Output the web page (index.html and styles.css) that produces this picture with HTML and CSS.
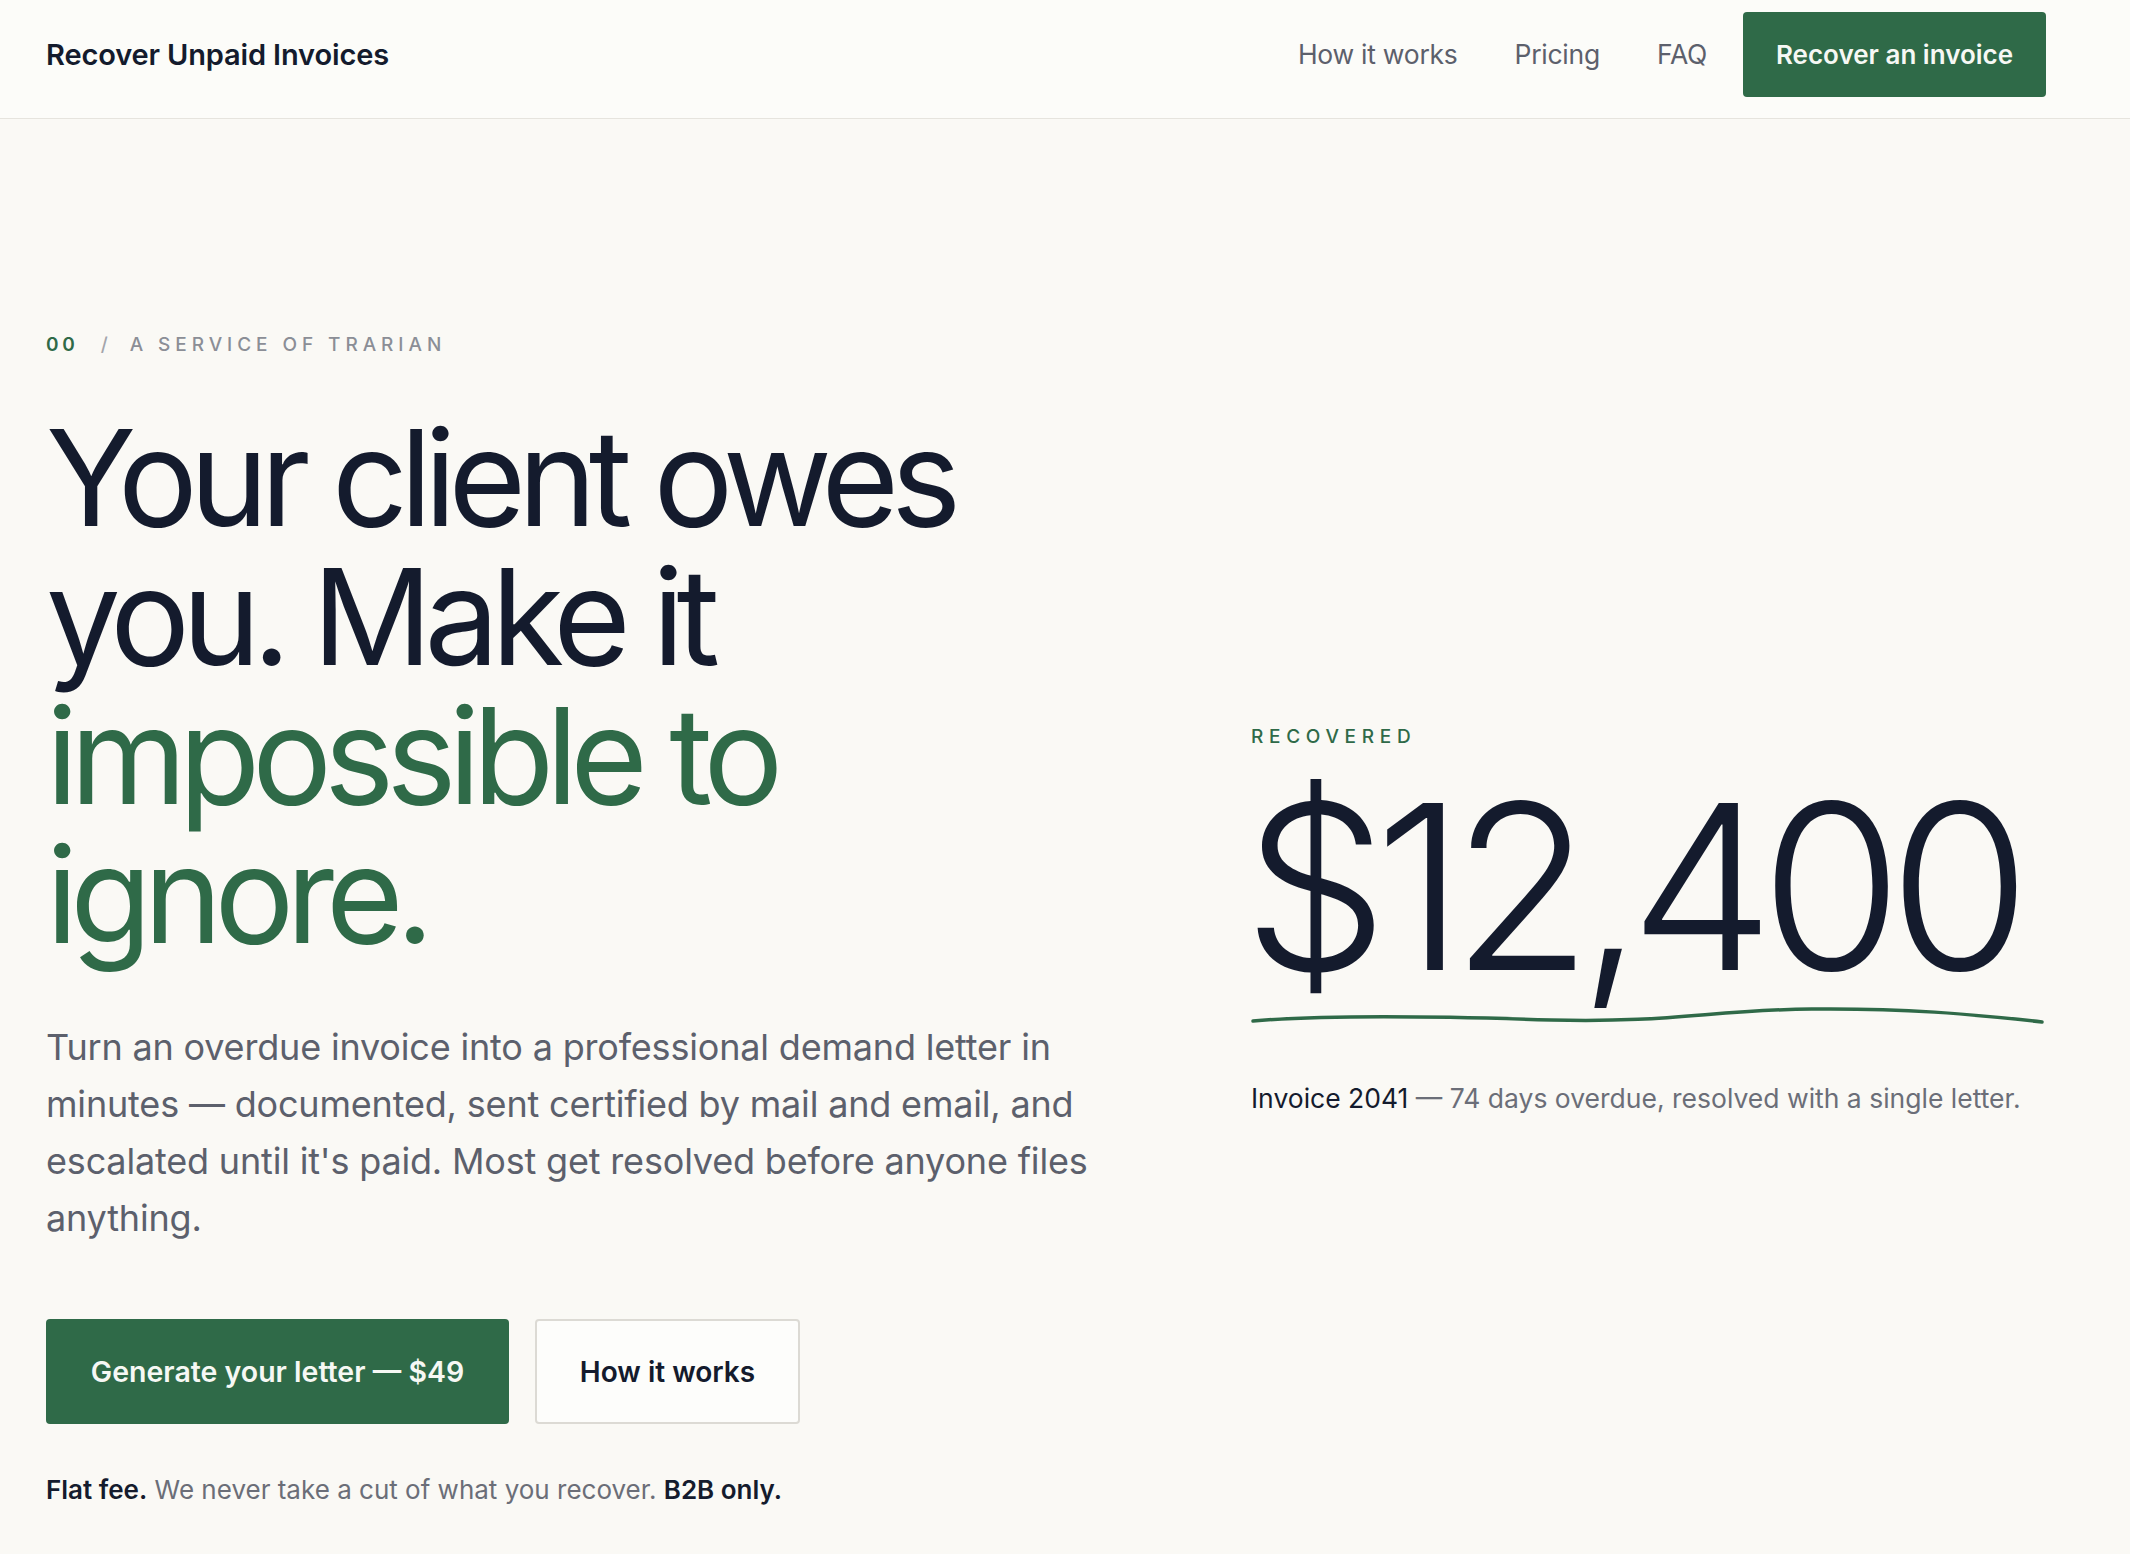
FILE: index.html
```html
<!DOCTYPE html>
<html lang="en">
<head>
<meta charset="utf-8">
<title>Recover Unpaid Invoices</title>
<link rel="stylesheet" href="styles.css">
</head>
<body>
<header class="site-header">
  <a class="brand" href="#">Recover Unpaid Invoices</a>
  <nav class="nav">
    <div class="nav-links">
      <a href="#">How it works</a>
      <a href="#">Pricing</a>
      <a href="#">FAQ</a>
    </div>
    <a class="btn btn-primary btn-nav" href="#">Recover an invoice</a>
  </nav>
</header>
<main class="hero">
  <section class="hero-copy">
    <p class="eyebrow"><span class="eyebrow-num">00</span><span class="eyebrow-sep">/</span><span>A SERVICE OF TRARIAN</span></p>
    <h1 class="headline">Your client owes you. Make it <span class="accent">impossible to ignore.</span></h1>
    <p class="lede">Turn an overdue invoice into a professional demand letter in minutes — documented, sent certified by mail and email, and escalated until it's paid. Most get resolved before anyone files anything.</p>
    <div class="actions">
      <a class="btn btn-primary btn-lg btn-cta" href="#">Generate your letter — $49</a>
      <a class="btn btn-secondary btn-lg" href="#">How it works</a>
    </div>
    <p class="fineprint"><strong>Flat fee.</strong> We never take a cut of what you recover. <strong>B2B only.</strong></p>
  </section>
  <aside class="stat">
    <p class="stat-label">RECOVERED</p>
    <p class="stat-amount">$12,400</p>
    <svg class="stat-underline" viewBox="0 0 794 22" preserveAspectRatio="none" aria-hidden="true">
      <path d="M2 17 C 60 12, 150 11, 300 16 C 420 19, 460 6, 560 5 C 650 4, 720 10, 790 18" fill="none" stroke="#2f6a48" stroke-width="3.5" stroke-linecap="round"/>
    </svg>
    <p class="stat-caption"><span class="stat-caption-strong">Invoice 2041</span> — 74 days overdue, resolved with a single letter.</p>
  </aside>
</main>
</body>
</html>
```

FILE: styles.css
```css
* { box-sizing: border-box; }

html, body {
  margin: 0;
  padding: 0;
}

body {
  background: #faf9f5;
  color: #141b2d;
  font-family: "Inter", "Roboto", "Liberation Sans", sans-serif;
  -webkit-font-smoothing: antialiased;
}

a { text-decoration: none; color: inherit; }

p { margin: 0; }

.site-header {
  height: 119px;
  display: flex;
  align-items: center;
  justify-content: space-between;
  padding: 0 84px 10px 46px;
  background: #fcfcf9;
  border-bottom: 1px solid #e6e4de;
}

.brand {
  font-size: 29px;
  font-weight: 600;
  letter-spacing: -0.005em;
  color: #141b2d;
}

.nav {
  display: flex;
  align-items: center;
}

.nav-links {
  display: flex;
  gap: 57px;
  font-size: 26.5px;
  color: #5c606c;
  letter-spacing: -0.01em;
}

.btn {
  display: inline-flex;
  align-items: center;
  justify-content: center;
  border-radius: 4px;
  font-weight: 600;
}

.btn-primary {
  background: #2f6a48;
  color: #f6f8f4;
}

.btn-nav {
  margin-left: 36px;
  height: 85px;
  width: 303px;
  font-size: 26px;
}

.hero {
  display: grid;
  grid-template-columns: 1fr 795px;
  column-gap: 100px;
  align-items: center;
  padding: 214px 84px 40px 46px;
}

.eyebrow {
  display: flex;
  align-items: center;
  gap: 22px;
  font-size: 19px;
  line-height: 24px;
  letter-spacing: 0.26em;
  color: #8b8e96;
  font-weight: 500;
}

.eyebrow-num {
  color: #2f6a48;
  font-weight: 600;
  letter-spacing: 0.2em;
}

.eyebrow-sep {
  letter-spacing: 0;
  color: #a3a5ab;
}

.headline {
  margin: 51px 0 0;
  max-width: 1000px;
  font-size: 133px;
  line-height: 139px;
  font-weight: 400;
  letter-spacing: -0.06em;
  color: #141b2d;
}

.accent { color: #2f6a48; }

.lede {
  margin-top: 55px;
  font-size: 36px;
  line-height: 57px;
  color: #5c606c;
  letter-spacing: -0.005em;
}

.actions {
  display: flex;
  gap: 26px;
  margin-top: 72px;
}

.btn-lg {
  height: 105px;
  font-size: 28px;
}

.btn-cta {
  width: 463px;
  font-size: 28.5px;
}

.btn-secondary {
  width: 265px;
  background: #fdfdfb;
  border: 2px solid #dcdad4;
  color: #141b2d;
}

.fineprint {
  margin-top: 48px;
  font-size: 26px;
  line-height: 36px;
  color: #6b6e78;
}

.fineprint strong {
  color: #141b2d;
  font-weight: 600;
}

.stat-label {
  font-size: 19px;
  line-height: 24px;
  letter-spacing: 0.3em;
  color: #2f6a48;
  font-weight: 500;
}

.stat-amount {
  margin-top: 19px;
  margin-left: -8px;
  font-size: 230px;
  line-height: 236px;
  font-weight: 300;
  letter-spacing: -0.06em;
  color: #141b2d;
}

.stat-underline {
  display: block;
  width: 795px;
  height: 22px;
  margin-top: 0;
}

.stat-caption {
  margin-top: 54px;
  font-size: 26.5px;
  line-height: 36px;
  color: #6b6e78;
}

.stat-caption-strong { color: #141b2d; }
```
